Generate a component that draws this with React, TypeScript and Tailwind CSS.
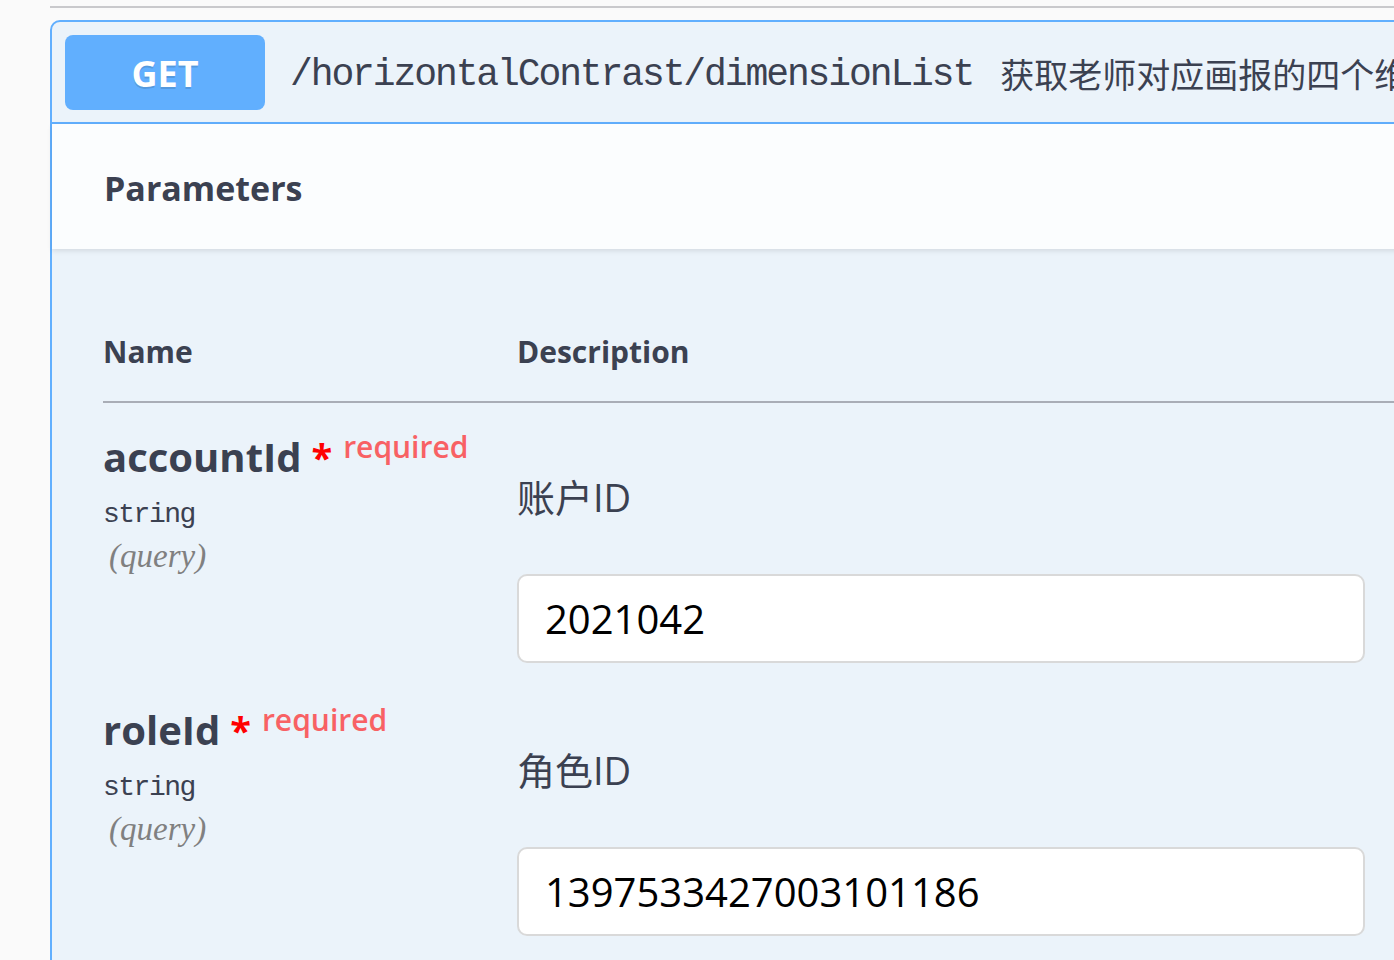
import React from "react";

const Param = ({ name, desc, value }: { name: string; desc: string; value: string }) => (
  <div className="flex">
    <div className="w-[414px] pt-[30px]">
      <div className="h-[48px] leading-[48px] whitespace-nowrap">
        <span className="text-[40px] font-bold text-[#3b4151]">{name}</span>
        <span className="text-[38px] font-bold text-[#ff0000]">{"\u00a0*"}</span>
        <span className="relative -top-[14px] ml-[11px] text-[30px] font-semibold text-[#f86164]">required</span>
      </div>
      <div className="mt-[14px] h-[40px] leading-[40px] text-[28px] tracking-[-1.5px] text-[#3b4151] font-['Liberation_Mono',monospace]">string</div>
      <div className="mt-[1px] h-[40px] leading-[40px] pl-[6px] text-[33px] italic text-[#808080] font-['Liberation_Serif',serif]">(query)</div>
    </div>
    <div className="w-[848px] pt-[70px] pb-[13px]">
      <div className="h-[48px] leading-[48px] text-[38px] text-[#3b4151]">{desc}</div>
      <div className="mt-[53px] h-[89px] rounded-[10px] border-2 border-[#d9d9d9] bg-white flex items-center pl-[26px] text-[40px] text-black">
        {value}
      </div>
    </div>
  </div>
);

export default function App() {
  return (
    <div className="w-[1394px] h-[960px] overflow-hidden bg-[#fafafa] font-['Open_Sans','Noto_Sans_CJK_SC',sans-serif]">
      <div className="pt-[6px]">
        <div className="ml-[50px] h-[2px] bg-[#c9c9cc]" />
      </div>
      <div className="ml-[50px] mt-[12px] w-[1400px] h-[960px] border-2 border-[#61affe] rounded-tl-[10px] bg-[#ebf3fa]">
        <div className="flex items-center h-[102px] pl-[13px] border-b-2 border-[#61affe] whitespace-nowrap overflow-hidden">
          <div className="w-[200px] h-[75px] shrink-0 rounded-[8px] bg-[#61affe] flex items-center justify-center pt-[4px] text-white font-bold text-[36px] [text-shadow:0_2px_0_rgba(0,0,0,0.12)]">
            GET
          </div>
          <span className="pl-[25px] pr-[27px] pt-[4px] text-[38px] tracking-[-2.1px] text-[#3b4151] font-['Liberation_Mono',monospace]">
            /horizontalContrast/dimensionList
          </span>
          <span className="pt-[2px] text-[34px] text-[#3b4151] font-['Noto_Sans_CJK_SC',sans-serif]">获取老师对应画报的四个维度列表</span>
        </div>
        <div className="h-[125px] flex items-center pt-[4px] pl-[52px] bg-[#fbfdfe] shadow-[0_2px_5px_rgba(0,0,0,0.1)] relative">
          <h4 className="text-[34px] font-bold text-[#3b4151]">Parameters</h4>
        </div>
        <div className="pl-[51px]">
          <div className="flex pt-[83px] pb-[29px] text-[30px] font-bold text-[#3b4151] leading-[40px]">
            <div className="w-[414px]">Name</div>
            <div>Description</div>
          </div>
          <div className="h-[2px] bg-[#a9adb6]" />
          <Param name="accountId" desc="账户ID" value="2021042" />
          <Param name="roleId" desc="角色ID" value="1397533427003101186" />
        </div>
      </div>
    </div>
  );
}
